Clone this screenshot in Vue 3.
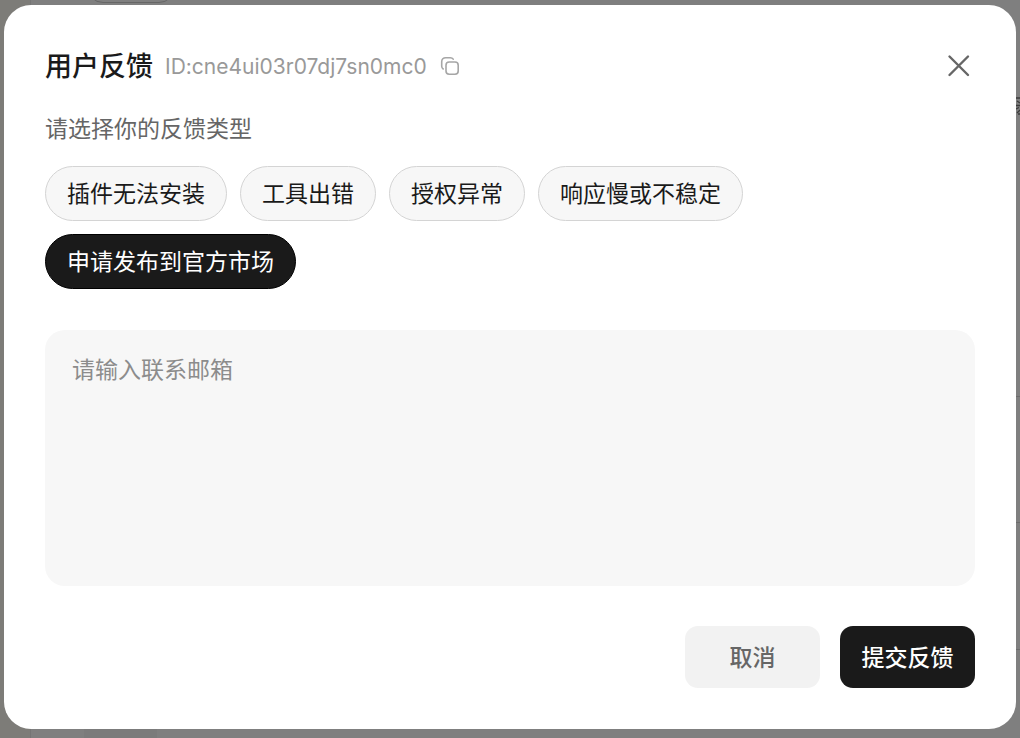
<script setup>
import { ref } from 'vue'

const types = ['插件无法安装', '工具出错', '授权异常', '响应慢或不稳定', '申请发布到官方市场']
const selected = ref('申请发布到官方市场')
const contact = ref('')
</script>

<template>
  <div class="page">
    <div class="backdrop" aria-hidden="true">
      <span class="strip"></span>
      <span class="pill"></span>
      <span class="tile"></span>
      <svg class="peek" width="4" height="20" viewBox="0 0 4 20" fill="none" stroke="#3c3c3c" stroke-width="1.3">
        <path d="M0 2H4M1 5L4 7M0 9.500H4M0 13L3 11.500M1 17L4 14M2 18H4" />
      </svg>
      <i class="rule first"></i>
      <i class="rule second"></i>
      <i class="rule third"></i>
    </div>
    <section class="dialog" role="dialog" aria-labelledby="dialog-title">
      <header class="head">
        <h1 id="dialog-title">用户反馈</h1>
        <span class="ident">ID:cne4ui03r07dj7sn0mc0</span>
        <button class="icon copy" type="button" aria-label="复制">
          <svg width="20" height="20" viewBox="0 0 20 20" fill="none" stroke="#a6a6a6" stroke-width="1.6" stroke-linecap="round">
            <rect x="6" y="6" width="12.200" height="12.200" rx="3.200" />
            <path d="M3.200 13C2.200 12.300 1.700 11.400 1.700 10.300V5.700C1.700 3.300 3.300 1.700 5.700 1.700H10.300C11.600 1.700 12.600 2.200 13.200 3.200" />
          </svg>
        </button>
        <button class="icon close" type="button" aria-label="关闭">
          <svg width="24" height="24" viewBox="0 0 24 24" fill="none" stroke="#666" stroke-width="2.4" stroke-linecap="round">
            <path d="M2.500 2.500L21 21M21 2.500L2.500 21" />
          </svg>
        </button>
      </header>
      <p id="type-label" class="label">请选择你的反馈类型</p>
      <div class="chips" role="group" aria-labelledby="type-label">
        <button
          v-for="type in types"
          :key="type"
          type="button"
          class="chip"
          :class="{ active: selected === type }"
          :aria-pressed="selected === type"
          @click="selected = type"
        >{{ type }}</button>
      </div>
      <textarea v-model="contact" class="contact" aria-label="联系邮箱" placeholder="请输入联系邮箱"></textarea>
      <footer class="actions">
        <button type="button" class="action cancel">取消</button>
        <button type="button" class="action submit">提交反馈</button>
      </footer>
    </section>
  </div>
</template>

<style>
html,
body,
#app {
  height: 100%;
  margin: 0;
}
</style>

<style scoped>
.page {
  position: relative;
  box-sizing: border-box;
  display: flex;
  min-height: 100%;
  padding: 5px 4px 9px;
  background: #7f7f7f;
  overflow: hidden;
  font-family: Inter, "Noto Sans CJK SC", sans-serif;
  font-size: 23px;
  line-height: 33px;
}
.backdrop {
  position: absolute;
  inset: 0;
  overflow: hidden;
}
.backdrop > * {
  position: absolute;
}
.strip {
  top: 0;
  bottom: 0;
  left: 0;
  width: 30px;
  background: #7d7c78;
  border-right: 1px solid #757575;
}
.pill {
  top: -30px;
  left: 87px;
  width: 86px;
  height: 31px;
  border: 1px solid #666;
  border-radius: 16px;
}
.tile {
  bottom: 0;
  left: 84px;
  width: 73px;
  height: 9px;
  background: #7b7b7b;
}
.peek {
  top: 96px;
  right: 0;
}
.rule {
  right: 0;
  width: 4px;
  height: 1px;
  background: #6c6c6c;
}
.first { top: 396px; }
.second { top: 522px; }
.third { top: 649px; }
.dialog {
  position: relative;
  box-sizing: border-box;
  flex: 1;
  display: flex;
  flex-direction: column;
  padding: 41px;
  border-radius: 27px;
  background: #fff;
}
button {
  font: inherit;
  cursor: pointer;
}
.head {
  display: flex;
  align-items: center;
  height: 40px;
}
h1 {
  margin: 0 12px 0 0;
  padding-top: 2px;
  font-size: 27px;
  line-height: 40px;
  font-weight: 500;
  color: #1a1a1a;
}
.ident {
  font-size: 21px;
  color: #999;
}
.icon {
  display: flex;
  padding: 0;
  border: 0;
  background: none;
}
.copy {
  margin-left: 13px;
}
.close {
  margin-left: auto;
  margin-right: 4px;
}
.label {
  margin: 27px 0 20px;
  color: #666;
}
.chips {
  display: flex;
  flex-wrap: wrap;
  gap: 13px;
  max-width: 800px;
}
.chip {
  padding: 11px 21px 9px;
  border: 1px solid #d4d4d4;
  border-radius: 28px;
  background: #f7f7f7;
  color: #1a1a1a;
}
.chip.active {
  border-color: #000;
  background: #1a1a1a;
  color: #fff;
}
.contact {
  flex: 1;
  box-sizing: border-box;
  width: 100%;
  margin: 41px 0 40px;
  padding: 24px 27px;
  border: 0;
  border-radius: 20px;
  background: #f7f7f7;
  color: #1a1a1a;
  font: inherit;
  resize: none;
  outline: none;
}
.contact::placeholder {
  color: #8c8c8c;
  opacity: 1;
}
.actions {
  display: flex;
  justify-content: flex-end;
  gap: 20px;
}
.action {
  height: 62px;
  min-width: 135px;
  padding: 2px 20px 0;
  border: 0;
  border-radius: 13px;
  font-weight: 500;
}
.cancel {
  background: #f2f2f2;
  color: #666;
}
.submit {
  background: #1a1a1a;
  color: #fff;
}
</style>
